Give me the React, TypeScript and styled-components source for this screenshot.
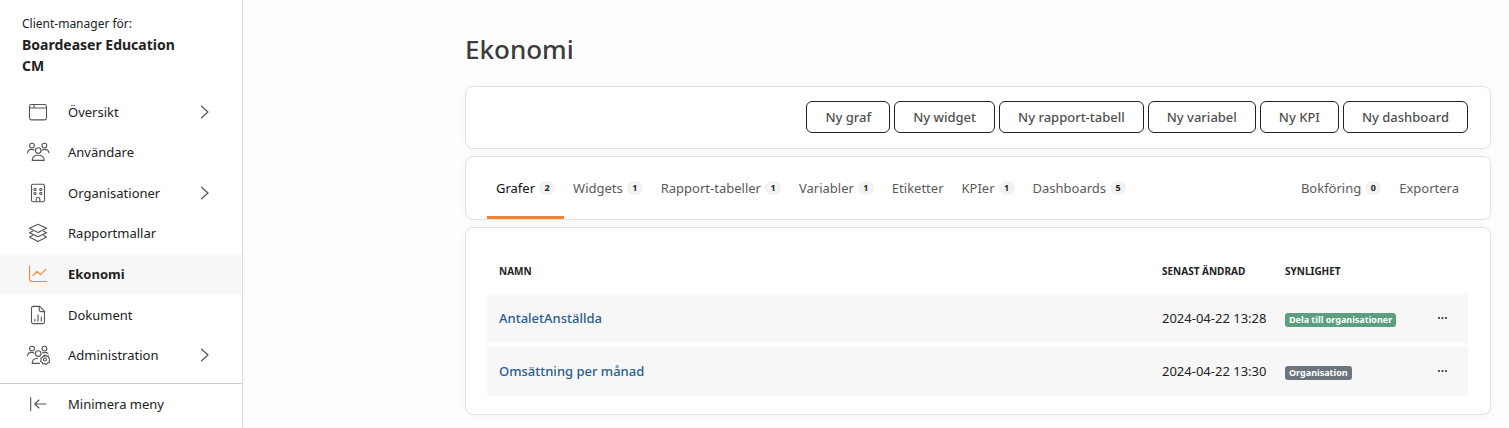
import React from "react";
import styled, { createGlobalStyle } from "styled-components";

const GlobalStyle = createGlobalStyle`
  *, *::before, *::after { box-sizing: border-box; }
  body {
    margin: 0;
    background: #fdfdfd;
    color: #222;
    font-family: "Noto Sans", "Open Sans", sans-serif;
    font-size: 13px;
    line-height: 20px;
  }
  a { color: inherit; text-decoration: none; }
  button { font: inherit; color: inherit; cursor: pointer; }
`;

const Page = styled.div`
  display: flex;
  min-height: 100vh;
`;

const Sidebar = styled.aside`
  flex: 0 0 243px;
  background: #fff;
  border-right: 1px solid #dcdcdc;
`;

const Client = styled.div`
  height: 92px;
  padding: 14px 56px 0 22px;
`;

const ClientLabel = styled.div`
  font-size: 12px;
`;

const ClientName = styled.div`
  font-size: 14px;
  font-weight: 700;
  line-height: 21px;
`;

const NavList = styled.ul`
  display: grid;
  grid-auto-rows: 1fr;
  height: 284px;
  margin: 0 0 7px;
  padding: 0;
  list-style: none;
`;

const NavLink = styled.a<{ $active?: boolean }>`
  display: flex;
  align-items: center;
  gap: 18px;
  height: 100%;
  padding: 0 31px 1px 26px;
  background: ${(p) => (p.$active ? "#f7f7f7" : "transparent")};
  font-weight: ${(p) => (p.$active ? 700 : 400)};
`;

const NavIcon = styled.svg<{ $active?: boolean }>`
  flex: none;
  width: 24px;
  height: 24px;
  fill: none;
  stroke: ${(p) => (p.$active ? "#f58232" : "#555")};
  stroke-width: 1.1;
  stroke-linecap: round;
  stroke-linejoin: round;
`;

const Chevron = styled.svg`
  flex: none;
  width: 12px;
  height: 14px;
  margin-left: auto;
  fill: none;
  stroke: #555;
  stroke-width: 1.2;
  stroke-linecap: round;
  stroke-linejoin: round;
`;

const Minimize = styled.button`
  display: flex;
  align-items: center;
  gap: 18px;
  width: 100%;
  height: 42px;
  padding: 0 26px 2px;
  border: 0;
  border-top: 1px solid #ccc;
  background: none;
`;

const Main = styled.main`
  display: flex;
  flex: 1;
  flex-direction: column;
  gap: 7px;
  min-width: 0;
  padding: 0 18px 12px 222px;
`;

const Title = styled.h1`
  margin: 0;
  padding: 32px 0 13px;
  color: #3c3c3c;
  font-size: 26px;
  font-weight: 500;
  line-height: 34px;
`;

const Card = styled.section`
  border: 1px solid #e2e2e2;
  border-radius: 8px;
  background: #fff;
  box-shadow: 0 0 8px rgba(0, 0, 0, 0.04);
`;

const Toolbar = styled(Card)`
  display: flex;
  justify-content: flex-end;
  gap: 4px;
  padding: 14px 22px 15px 21px;
`;

const ToolButton = styled.button`
  height: 32px;
  padding: 0 18px;
  border: 1px solid #222;
  border-radius: 6px;
  background: #fff;
  color: #505050;
  font-weight: 500;
`;

const Tabs = styled(Card)`
  display: flex;
  height: 64px;
  padding: 0 22px 0 21px;
`;

const Tab = styled.a<{ $active?: boolean }>`
  display: flex;
  align-items: center;
  gap: 4px;
  padding: 3px 9px 0;
  border-bottom: 3px solid ${(p) => (p.$active ? "#f58232" : "transparent")};
  color: ${(p) => (p.$active ? "#111" : "#5a5a5a")};
`;

const TabSpacer = styled.div`
  flex: 1;
`;

const Count = styled.span`
  min-width: 16px;
  border-radius: 7px;
  background: #f2f2f2;
  color: #222;
  font-size: 9px;
  font-weight: 700;
  line-height: 14px;
  text-align: center;
`;

const TableCard = styled(Card)`
  padding: 20px 22px 14px 21px;
`;

const Table = styled.table`
  width: 100%;
  border-spacing: 0 4px;
  table-layout: fixed;
`;

const HeadCell = styled.th<{ $width?: number }>`
  width: ${(p) => (p.$width ? `${p.$width}px` : "auto")};
  height: 38px;
  padding: 0 0 0 12px;
  font-size: 10px;
  font-weight: 700;
  text-align: left;
  text-transform: uppercase;
`;

const Cell = styled.td`
  height: 49px;
  padding: 0 0 1px 12px;
  background: #f7f7f7;
  white-space: nowrap;
`;

const NameLink = styled.a`
  color: #2a5c8f;
  font-weight: 500;
`;

const Badge = styled.span<{ $shared?: boolean }>`
  display: inline-block;
  padding: 0 4px;
  border-radius: 3px;
  background: ${(p) => (p.$shared ? "#5b9f7f" : "#6c757d")};
  color: #fff;
  font-size: 9px;
  font-weight: 700;
  line-height: 14px;
  vertical-align: middle;
`;

const MoreButton = styled.button`
  display: flex;
  padding: 8px;
  border: 0;
  background: none;
`;

const icons: Record<string, React.ReactNode> = {
  window: (
    <>
      <rect x="3.5" y="4.5" width="17" height="15.4" rx="1.8" />
      <path d="M3.5 8h17M8 4.5V8" />
    </>
  ),
  users: (
    <>
      <circle cx="6" cy="5.6" r="2.4" />
      <circle cx="18.4" cy="5.6" r="2.4" />
      <circle cx="12.2" cy="10.6" r="2.8" />
      <path d="M1.4 12.8c.5-2.4 2.3-3.6 4.4-3.4 1 0 1.7.3 2.3.7M23 12.8c-.5-2.4-2.3-3.600-4.400-3.400-1 0-1.700.3-2.300.7" />
      <path d="M6.200 20.400c0-3.600 2.500-5.100 6-5.100s6 1.500 6 5.100z" />
    </>
  ),
  building: (
    <>
      <rect x="5.5" y="3.2" width="13" height="17.6" rx="1.6" />
      <circle cx="9" cy="8.4" r="1.1" />
      <circle cx="14.8" cy="8.4" r="1.1" />
      <circle cx="9" cy="12.4" r="1.1" />
      <circle cx="14.8" cy="12.4" r="1.1" />
      <path d="M10.2 20.5v-2.600c0-1 .8-1.700 1.800-1.700s1.800.7 1.800 1.700v2.600" />
    </>
  ),
  layers: (
    <>
      <path d="M12 3.200l8.500 4.100-8.500 4.100-8.500-4.100z" />
      <path d="M6.500 10.200l-3 1.500 8.500 4.100 8.500-4.100-3-1.500" />
      <path d="M6.500 14.600l-3 1.500 8.500 4.300 8.500-4.300-3-1.500" />
    </>
  ),
  chart: (
    <>
      <path d="M3.500 4v12.800c0 1.700 1 2.700 2.700 2.700h14.300" />
      <path d="M7 13.700l4-4.400 3.600 3.400 5.200-5.300" />
    </>
  ),
  document: (
    <>
      <path d="M13.500 3.400H7.300c-1.100 0-1.800.7-1.800 1.800v13.600c0 1.100.7 1.800 1.800 1.800h9.400c1.100 0 1.800-.7 1.800-1.800V8.200z" />
      <path d="M13.200 3.400v3.400c0 1.200.6 1.800 1.800 1.800h3.400M8.900 18.200v-2M12 18.200v-6.400M15.300 18.200v-4.200" />
    </>
  ),
  admin: (
    <>
      <circle cx="6" cy="5.6" r="2.4" />
      <circle cx="18.4" cy="5.6" r="2.4" />
      <circle cx="12.2" cy="10.6" r="2.8" />
      <path d="M1.400 12.800c.5-2.400 2.300-3.600 4.400-3.400 1 0 1.700.3 2.300.7M22 10.500c-1.200-.9-3.200-1.600-5.400-.6" />
      <path d="M13.500 20.400H6.200c0-3.300 2.200-5 5.400-5.100" />
      <path d="M19 11.900l1.300 1.300 1.900-.3.300 1.900 1.500 1.100-.8 1.700.3 1.900-1.900.4-1.100 1.500-1.600-.9-1.800.6-.8-1.700-1.700-.9.700-1.700-.5-1.800 1.800-.6.800-1.700 1.600.7z" />
      <circle cx="19" cy="16.500" r="1.500" />
    </>
  ),
  minimize: <path d="M4.700 5.500v13M9 12h11M13 8l-4.200 4 4.200 4" />,
};

const Icon = ({ name, active }: { name: string; active?: boolean }) => (
  <NavIcon viewBox="0 0 24 24" $active={active} aria-hidden="true">
    {icons[name]}
  </NavIcon>
);

const navItems = [
  { label: "Översikt", icon: "window", expandable: true },
  { label: "Användare", icon: "users" },
  { label: "Organisationer", icon: "building", expandable: true },
  { label: "Rapportmallar", icon: "layers" },
  { label: "Ekonomi", icon: "chart", active: true },
  { label: "Dokument", icon: "document" },
  { label: "Administration", icon: "admin", expandable: true },
];

const actions = ["Ny graf", "Ny widget", "Ny rapport-tabell", "Ny variabel", "Ny KPI", "Ny dashboard"];

const leftTabs = [
  { label: "Grafer", count: 2, active: true },
  { label: "Widgets", count: 1 },
  { label: "Rapport-tabeller", count: 1 },
  { label: "Variabler", count: 1 },
  { label: "Etiketter" },
  { label: "KPIer", count: 1 },
  { label: "Dashboards", count: 5 },
];

const rightTabs = [{ label: "Bokföring", count: 0 }, { label: "Exportera" }];

const graphs = [
  { name: "AntaletAnställda", changed: "2024-04-22 13:28", visibility: "Dela till organisationer", shared: true },
  { name: "Omsättning per månad", changed: "2024-04-22 13:30", visibility: "Organisation", shared: false },
];

const TabItem = ({ label, count, active }: { label: string; count?: number; active?: boolean }) => (
  <Tab href="#" $active={active} aria-current={active ? "page" : undefined}>
    {label}
    {count !== undefined && <Count>{count}</Count>}
  </Tab>
);

export default function App() {
  return (
    <>
      <GlobalStyle />
      <Page>
        <Sidebar>
          <Client>
            <ClientLabel>Client-manager för:</ClientLabel>
            <ClientName>Boardeaser Education CM</ClientName>
          </Client>
          <nav>
            <NavList>
              {navItems.map((item) => (
                <li key={item.label}>
                  <NavLink href="#" $active={item.active}>
                    <Icon name={item.icon} active={item.active} />
                    {item.label}
                    {item.expandable && (
                      <Chevron viewBox="0 0 12 14" aria-hidden="true">
                        <path d="M2.500 1.200l6.500 5.800-6.500 5.800" />
                      </Chevron>
                    )}
                  </NavLink>
                </li>
              ))}
            </NavList>
          </nav>
          <Minimize type="button">
            <Icon name="minimize" />
            Minimera meny
          </Minimize>
        </Sidebar>
        <Main>
          <Title>Ekonomi</Title>
          <Toolbar>
            {actions.map((label) => (
              <ToolButton key={label} type="button">
                {label}
              </ToolButton>
            ))}
          </Toolbar>
          <Tabs as="nav">
            {leftTabs.map((tab) => (
              <TabItem key={tab.label} {...tab} />
            ))}
            <TabSpacer />
            {rightTabs.map((tab) => (
              <TabItem key={tab.label} {...tab} />
            ))}
          </Tabs>
          <TableCard>
            <Table>
              <thead>
                <tr>
                  <HeadCell>Namn</HeadCell>
                  <HeadCell $width={123}>Senast ändrad</HeadCell>
                  <HeadCell $width={144}>Synlighet</HeadCell>
                  <HeadCell $width={51} aria-label="Åtgärder" />
                </tr>
              </thead>
              <tbody>
                {graphs.map((graph) => (
                  <tr key={graph.name}>
                    <Cell>
                      <NameLink href="#">{graph.name}</NameLink>
                    </Cell>
                    <Cell>{graph.changed}</Cell>
                    <Cell>
                      <Badge $shared={graph.shared}>{graph.visibility}</Badge>
                    </Cell>
                    <Cell>
                      <MoreButton type="button" aria-label="Fler val">
                        <svg width="11" height="4" viewBox="0 0 11 4" fill="#333" aria-hidden="true">
                          <circle cx="2" cy="2" r="1.1" />
                          <circle cx="5.5" cy="2" r="1.1" />
                          <circle cx="9" cy="2" r="1.1" />
                        </svg>
                      </MoreButton>
                    </Cell>
                  </tr>
                ))}
              </tbody>
            </Table>
          </TableCard>
        </Main>
      </Page>
    </>
  );
}
